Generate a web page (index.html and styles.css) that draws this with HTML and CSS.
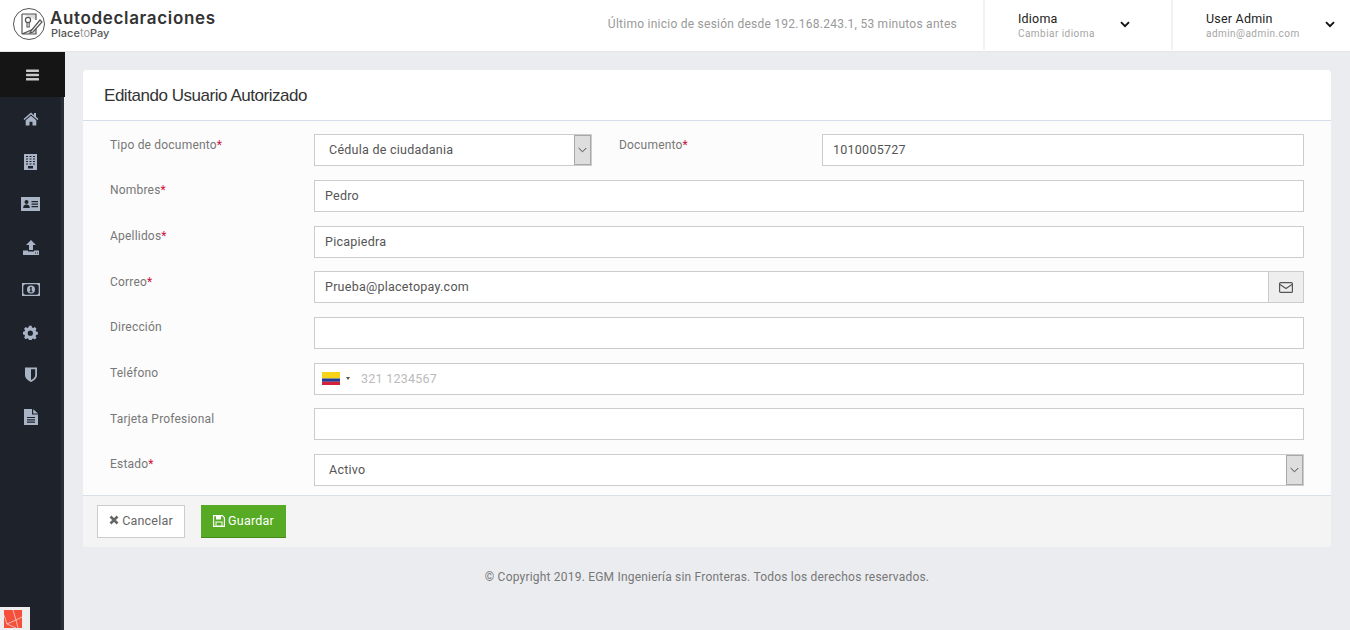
FILE: index.html
```html
<!DOCTYPE html>
<html lang="es">
<head>
  <meta charset="UTF-8">
  <meta name="viewport" content="width=device-width, initial-scale=1">
  <title>Autodeclaraciones</title>
  <link rel="stylesheet" href="styles.css">
</head>
<body>
  <header class="topbar">
    <div class="logo">
      <svg class="logo-mark" viewBox="0 0 34 34" width="34" height="34" fill="none" stroke="#555" stroke-width="1">
        <circle cx="17" cy="17" r="15.5"/>
        <path d="M10 7h14v6M24 21v6H10z" fill="#ddd" stroke-width="1.2"/>
        <path d="M10 7v20" stroke-width="1.2"/>
        <circle cx="16" cy="13" r="2.6" stroke-width="1.2"/>
        <path d="M15 16v4h2.2v-4" stroke-width="1.1"/>
        <path d="M19 24l9-11 2 2-9 10-3 1z" fill="#fff" stroke-width="1.2"/>
      </svg>
      <div class="logo-text">
        <div class="logo-title">Autodeclaraciones</div>
        <div class="logo-sub">Place<span class="logo-to">to</span>Pay</div>
      </div>
    </div>
    <div class="last-login">Último inicio de sesión desde 192.168.243.1, 53 minutos antes</div>
    <div class="top-menu menu-lang">
      <div>
        <div class="top-name">Idioma</div>
        <div class="top-sub">Cambiar idioma</div>
      </div>
      <svg class="chev" viewBox="0 0 10 7" width="10" height="7"><path d="M1 1.2l4 4 4-4" fill="none" stroke="#111" stroke-width="1.9"/></svg>
    </div>
    <div class="top-menu menu-user">
      <div>
        <div class="top-name">User Admin</div>
        <div class="top-sub">admin@admin.com</div>
      </div>
      <svg class="chev" viewBox="0 0 10 7" width="10" height="7"><path d="M1 1.2l4 4 4-4" fill="none" stroke="#111" stroke-width="1.9"/></svg>
    </div>
  </header>

  <div class="layout">
    <aside class="sidebar">
      <div class="toggle">
        <svg viewBox="0 0 14 12" width="14" height="12" fill="#c9c9c9"><rect y="0.5" width="13" height="2.4" rx="0.6"/><rect y="4.8" width="13" height="2.4" rx="0.6"/><rect y="9.1" width="13" height="2.4" rx="0.6"/></svg>
      </div>
      <nav class="side-icons">
        <a class="side-item"><svg viewBox="0 0 16 14" width="16" height="14"><path d="M8 0.5L0.5 7l1 1.1L8 2.6l6.500 5.500 1-1.100-2.500-2.200V1h-2v2.200z"/><path d="M8 3.800L2.700 8.300V13.500h3.800V9.700h3V13.500h3.800V8.300z"/></svg></a>
        <a class="side-item"><svg viewBox="0 0 13 16" width="13" height="16"><path fill-rule="evenodd" d="M0 0h13v16H0zM2 2v1h2V2zM5.500 2v1h2V2zM9 2v1h2V2zM2 4.500v1h2v-1zM5.500 4.500v1h2v-1zM9 4.500v1h2v-1zM2 7v1h2V7zM5.500 7v1h2V7zM9 7v1h2V7zM2 9.500v1h2v-1zM5.500 9.500v1h2v-1zM9 9.500v1h2v-1zM4 12v2.500h5V12z"/></svg></a>
        <a class="side-item"><svg viewBox="0 0 19 14" width="19" height="14"><path fill-rule="evenodd" d="M0 0h19v14H0zM5.500 3a2 2 0 1 0 0 4 2 2 0 0 0 0-4zM2.200 11h6.600c0-2.200-1-3.500-3.300-3.500S2.200 8.800 2.200 11zM10.500 4v1.300H17V4zM10.500 6.500v1.300H17V6.500zM10.500 9v1.300H17V9z"/></svg></a>
        <a class="side-item"><svg viewBox="0 0 16 15" width="16" height="15"><path d="M8 0L3 5h3v5h4V5h3z"/><path fill-rule="evenodd" d="M0 10.500h5v1h6v-1h5V15H0zM12 12.500v.9h1v-.9zM14 12.500v.9h1v-.9z"/></svg></a>
        <a class="side-item"><svg viewBox="0 0 18 13" width="18" height="13"><rect width="18" height="13"/><rect x="1.300" y="1.300" width="15.400" height="10.400" rx="2.500" fill="#1e222b"/><circle cx="9" cy="6.500" r="4"/><path d="M8.300 4h1.400v4.200h.8v1H7.500v-1h.8V5.400h-.7z" fill="#1e222b"/></svg></a>
        <a class="side-item"><svg viewBox="0 0 15 15" width="15" height="15"><path fill-rule="evenodd" d="M6 0h3l.4 2 1.500.6 1.700-1.100 2 2-1.100 1.700.6 1.500 2 .4v3l-2 .4-.6 1.500 1.100 1.700-2 2-1.700-1.100-1.500.6L9 17H6l-.4-2-1.500-.6-1.700 1.100-2-2 1.100-1.700-.6-1.500-2-.4V7l2-.4.6-1.500-1.100-1.700 2-2 1.700 1.100 1.500-.6zM7.500 5.500a3 3 0 1 0 0 6 3 3 0 0 0 0-6z" transform="translate(0.700 0.700) scale(0.88)"/></svg></a>
        <a class="side-item"><svg viewBox="0 0 12 15" width="12" height="15"><path fill-rule="evenodd" d="M0 0.500h12V8c0 3.500-3 5.500-6 7-3-1.500-6-3.500-6-7zM6 2.300H10.200V8c0 2.500-2.200 4-4.200 5z"/></svg></a>
        <a class="side-item"><svg viewBox="0 0 14 16" width="14" height="16"><path fill-rule="evenodd" d="M0 0h8v5.500h6V16H0zM3 8v1.100h8V8zM3 10.300v1.100h8v-1.100zM3 12.600v1.100h8v-1.100z"/><path d="M9.200 0.200L14 4.400H9.200z"/></svg></a>
      </nav>
      <div class="debug-tab">
        <svg viewBox="0 0 18 18" width="18" height="18"><rect width="18" height="18" fill="#f4503b"/><path d="M0 5l3 9 9 4M3 14l9-4 6-3M12 10L9 0M12 10l2 8" fill="none" stroke="#fff" stroke-width="0.600"/></svg>
      </div>
    </aside>

    <main class="content">
      <section class="card">
        <h1 class="card-title">Editando Usuario Autorizado</h1>
        <form class="card-body">
          <div class="row row-split">
            <label class="lbl">Tipo de documento<span class="req">*</span></label>
            <div class="select select-short">
              <span class="select-value">Cédula de ciudadania</span>
              <span class="select-btn"><svg viewBox="0 0 9 6" width="9" height="6"><path d="M0.700 1l3.800 3.800L8.300 1" fill="none" stroke="#444" stroke-width="1"/></svg></span>
            </div>
            <label class="lbl lbl-doc">Documento<span class="req">*</span></label>
            <input class="field" type="text" value="1010005727">
          </div>
          <div class="row">
            <label class="lbl">Nombres<span class="req">*</span></label>
            <input class="field" type="text" value="Pedro">
          </div>
          <div class="row">
            <label class="lbl">Apellidos<span class="req">*</span></label>
            <input class="field" type="text" value="Picapiedra">
          </div>
          <div class="row">
            <label class="lbl">Correo<span class="req">*</span></label>
            <div class="group">
              <input class="field field-grow" type="text" value="Prueba@placetopay.com">
              <span class="addon"><svg viewBox="0 0 14 11" width="14" height="11"><rect x="0.600" y="0.600" width="12.800" height="9.800" rx="1" fill="none" stroke="#555" stroke-width="1.200"/><path d="M1 2.500l6 4 6-4" fill="none" stroke="#555" stroke-width="1.100"/></svg></span>
            </div>
          </div>
          <div class="row">
            <label class="lbl">Dirección</label>
            <input class="field" type="text">
          </div>
          <div class="row">
            <label class="lbl">Teléfono</label>
            <div class="phone">
              <svg class="flag" viewBox="0 0 18 13" width="18" height="13"><rect width="18" height="6.500" fill="#f7d417"/><rect y="6.500" width="18" height="3.250" fill="#1f3d99"/><rect y="9.750" width="18" height="3.250" fill="#d5203a"/></svg>
              <span class="caret"></span>
              <input class="phone-input" type="text" placeholder="321 1234567">
            </div>
          </div>
          <div class="row">
            <label class="lbl">Tarjeta Profesional</label>
            <input class="field" type="text">
          </div>
          <div class="row">
            <label class="lbl">Estado<span class="req">*</span></label>
            <div class="select">
              <span class="select-value">Activo</span>
              <span class="select-btn"><svg viewBox="0 0 9 6" width="9" height="6"><path d="M0.700 1l3.800 3.800L8.300 1" fill="none" stroke="#444" stroke-width="1"/></svg></span>
            </div>
          </div>
        </form>
        <div class="card-footer">
          <button class="btn btn-cancel" type="button"><svg viewBox="0 0 10 10" width="10" height="10"><path d="M1.500 1.500l7 7M8.500 1.500l-7 7" stroke="#666" stroke-width="2.600"/></svg> Cancelar</button>
          <button class="btn btn-save" type="button"><svg viewBox="0 0 12 12" width="12" height="12"><path fill="none" stroke="#fff" stroke-width="1.200" d="M0.600 0.600h8.700l2.100 2.100v8.700H0.600z"/><path fill="#fff" d="M3 1h5v3.500H3zM2.500 6.500h7V11h-7z"/><path fill="#57ab24" d="M3.500 7.500h5V10.500h-5z"/></svg> Guardar</button>
        </div>
      </section>
      <footer class="copy">© Copyright 2019. EGM Ingeniería sin Fronteras. Todos los derechos reservados.</footer>
    </main>
  </div>
</body>
</html>
```

FILE: styles.css
```css
* {
  box-sizing: border-box;
}
html, body {
  height: 100%;
}
body {
  margin: 0;
  font-family: Roboto, "Liberation Sans", sans-serif;
  font-size: 13px;
  color: #555;
  background-color: #ebecf0;
  overflow: hidden;
}

/* top bar */
.topbar {
  display: flex;
  align-items: stretch;
  height: 51px;
  background: #fff;
  box-shadow: 0 1px 0 #e6e6e6;
}
.logo {
  display: flex;
  align-items: center;
  width: 400px;
  padding: 0 0 3px 12px;
}
.logo-mark {
  flex: none;
}
.logo-text {
  margin-left: 4px;
}
.logo-title {
  font-family: Inter, sans-serif;
  font-size: 17px;
  font-weight: 600;
  line-height: 17px;
  letter-spacing: 0.650px;
  color: #333;
}
.logo-sub {
  font-family: Inter, sans-serif;
  font-size: 11px;
  font-weight: 500;
  line-height: 12px;
  margin-left: 1px;
  color: #555;
}
.logo-to {
  font-weight: 400;
  color: #999;
}
.last-login {
  width: 583px;
  padding: 17px 26px 0 0;
  text-align: right;
  font-size: 12px;
  letter-spacing: 0.250px;
  color: #999;
}
.top-menu {
  display: flex;
  align-items: center;
  justify-content: space-between;
  height: 50px;
  border-left: 2px solid #f2f2f2;
  padding-top: 1px;
}
.menu-lang {
  width: 188px;
  padding-left: 33px;
  padding-right: 41px;
}
.menu-user {
  width: 179px;
  padding-left: 33px;
  padding-right: 15px;
}
.top-name {
  font-size: 12.500px;
  line-height: 16px;
  letter-spacing: 0.200px;
  color: #222;
}
.top-sub {
  font-size: 10px;
  line-height: 13px;
  letter-spacing: 0.450px;
  color: #a5a5a5;
}
.chev {
  margin-bottom: 3px;
}

/* sidebar */
.layout {
  display: flex;
  height: 579px;
  margin-top: 1px;
}
.sidebar {
  position: relative;
  flex: none;
  width: 64px;
  background: #1e222b;
  border-right: 3px solid #2a2e37;
}
.toggle {
  display: flex;
  align-items: center;
  justify-content: center;
  width: 65px;
  height: 45px;
  background: #151515;
}
.side-icons {
  display: flex;
  flex-direction: column;
  padding-top: 1px;
}
.side-item {
  display: flex;
  align-items: center;
  justify-content: center;
  height: 42.600px;
}
.side-item svg {
  fill: #a9b5c6;
}
.debug-tab {
  position: absolute;
  left: 0;
  bottom: 0;
  width: 30px;
  height: 24px;
  padding: 3px 0 0 4px;
  background: #eee;
  overflow: hidden;
}

/* card */
.content {
  flex: 1;
  padding: 18px 19px 0;
}
.card {
  border-radius: 4px;
  background: #fff;
  overflow: hidden;
}
.card-title {
  margin: 0;
  height: 51px;
  padding: 15px 21px 0;
  font-family: "Liberation Sans", sans-serif;
  font-size: 17px;
  font-weight: 400;
  line-height: 22px;
  letter-spacing: -0.460px;
  color: #333;
  border-bottom: 1px solid #d3e0eb;
}
.card-body {
  display: flex;
  flex-direction: column;
  gap: 13.700px;
  height: 375px;
  padding: 13.150px 27px 0;
  margin: 0;
  background: #fcfcfc;
  border-bottom: 1px solid #d9e0e8;
}
.row {
  display: grid;
  grid-template-columns: 204px 1fr;
  height: 32px;
}
.row-split {
  grid-template-columns: 204px 278px 230px 1fr;
}
.lbl {
  padding: 3.400px 0 0 0;
  font-size: 12px;
  line-height: 15px;
  letter-spacing: 0.200px;
  color: #777;
}
.lbl-doc {
  padding-left: 27px;
}
.req {
  color: #d0103a;
}
.field {
  width: 100%;
  height: 32px;
  padding: 0 10px 1px;
  border: 1px solid #ccc;
  border-radius: 0;
  background: #fff;
  font-family: Roboto, "Liberation Sans", sans-serif;
  font-size: 12.500px;
  letter-spacing: 0.250px;
  color: #555;
  outline: none;
}
.select {
  display: flex;
  align-items: center;
  justify-content: space-between;
  height: 32px;
  padding-left: 14px;
  border: 1px solid #ccc;
  background: #fff;
  font-size: 12.500px;
  letter-spacing: 0.250px;
  color: #555;
}
.select-short .select-value {
  margin-bottom: 2px;
}
.select-btn {
  display: flex;
  align-items: center;
  justify-content: center;
  width: 17px;
  height: 30px;
  background: #dedede;
  border: 1px solid #a8a8a8;
}
.group {
  display: flex;
}
.field-grow {
  flex: 1;
  border-right: none;
}
.addon {
  display: flex;
  align-items: center;
  justify-content: center;
  flex: none;
  width: 36px;
  height: 32px;
  background: #eee;
  border: 1px solid #ccc;
}
.phone {
  display: flex;
  align-items: center;
  height: 32px;
  padding-left: 7px;
  border: 1px solid #ccc;
  background: #fff;
}
.flag {
  flex: none;
}
.caret {
  width: 0;
  height: 0;
  margin-left: 6px;
  border-top: 3px solid #555;
  border-left: 2.500px solid transparent;
  border-right: 2.500px solid transparent;
}
.phone-input {
  flex: 1;
  height: 30px;
  margin-left: 11px;
  padding: 0;
  border: 0;
  background: transparent;
  font-family: Roboto, "Liberation Sans", sans-serif;
  font-size: 12.500px;
  letter-spacing: 0.250px;
  outline: none;
}
.phone-input::placeholder {
  color: #bbb;
}
.card-footer {
  display: flex;
  gap: 16px;
  height: 51px;
  padding: 9px 14px 0;
  background: #f4f4f4;
}
.btn {
  height: 33px;
  font-family: Roboto, "Liberation Sans", sans-serif;
  font-size: 12.500px;
  letter-spacing: 0.200px;
  border-radius: 0;
  padding: 0 0 1px;
  display: flex;
  align-items: center;
  justify-content: center;
  gap: 3px;
}
.btn-cancel {
  width: 88px;
  padding-bottom: 3px;
  color: #666;
  background: #fff;
  border: 1px solid #ccc;
}
.btn-save {
  width: 85px;
  color: #fff;
  background: #57ab24;
  border: none;
  border-bottom: 1px solid #438a18;
}
.copy {
  padding-top: 23px;
  text-align: center;
  font-size: 12px;
  letter-spacing: 0.200px;
  color: #777;
}
```
